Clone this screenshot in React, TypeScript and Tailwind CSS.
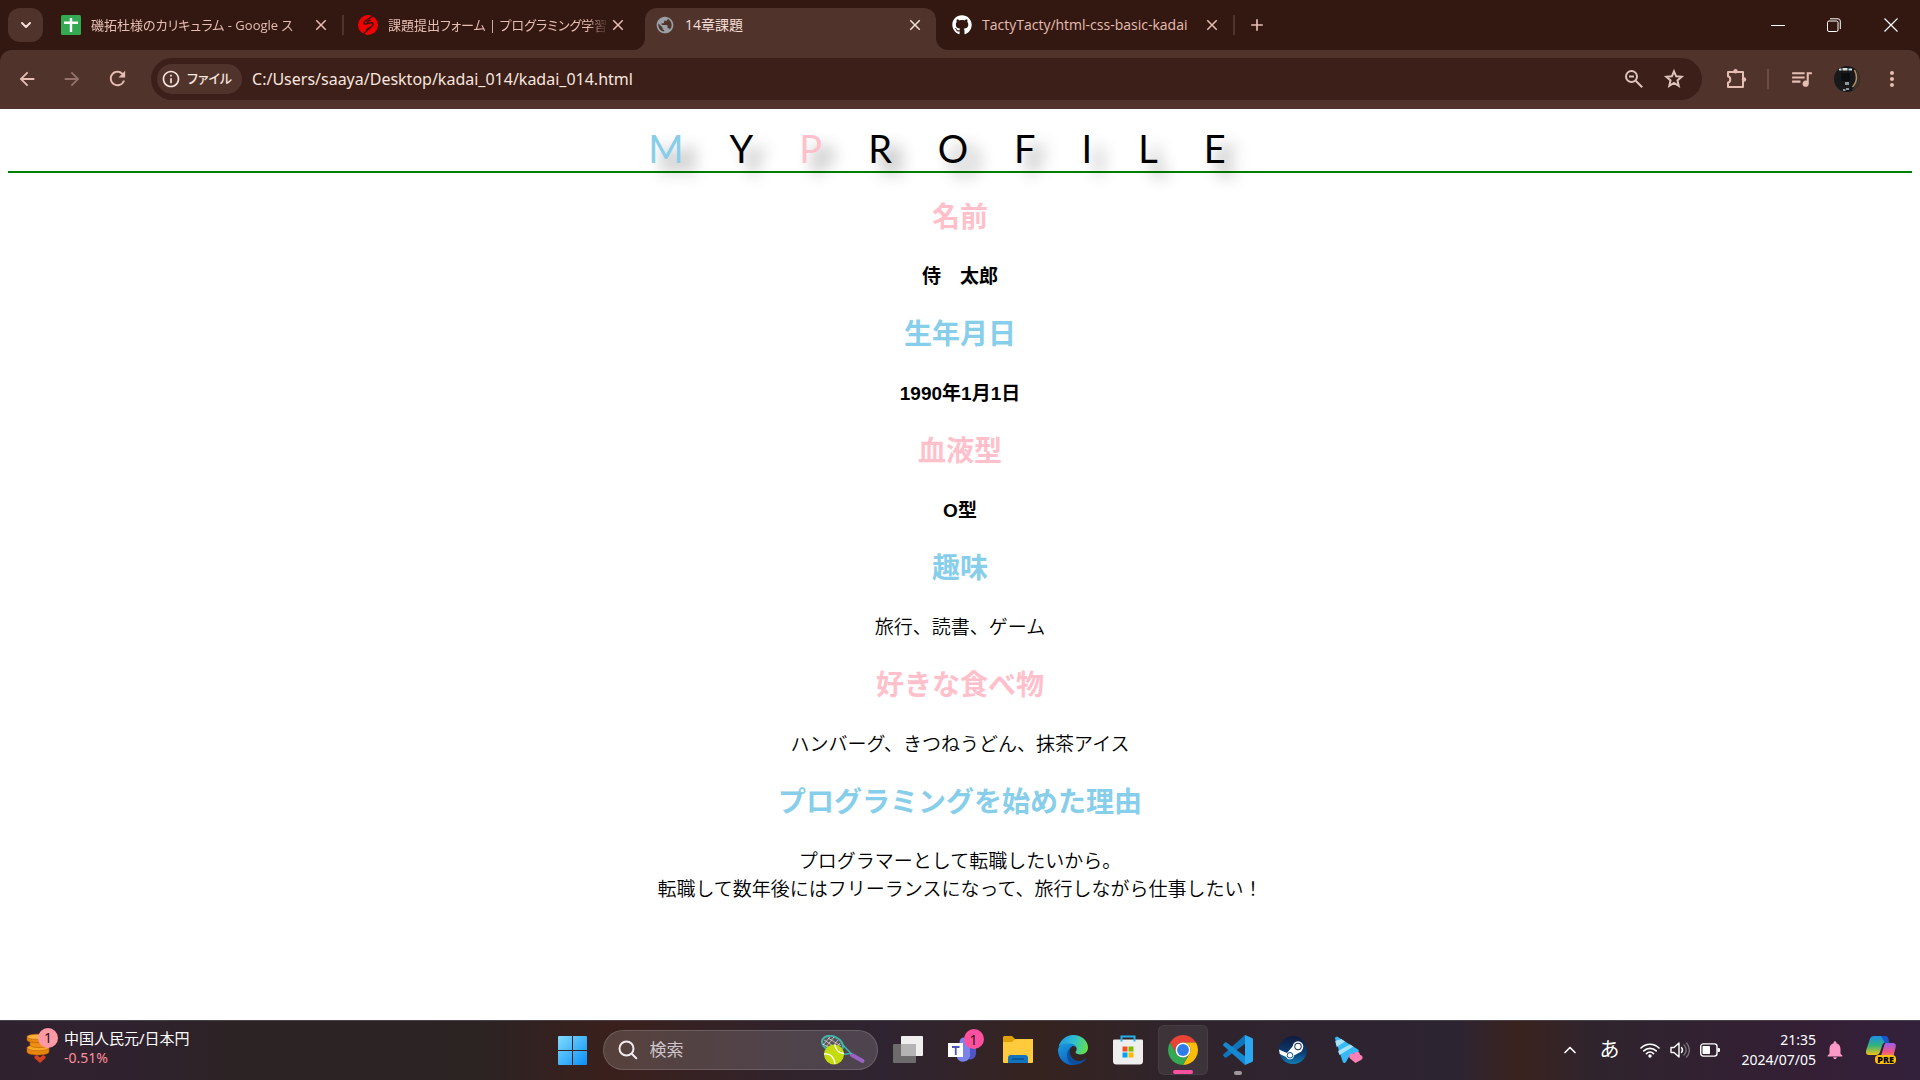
import React from "react";
import {
  MdArrowBack,
  MdArrowForward,
  MdRefresh,
  MdInfoOutline,
  MdQueueMusic,
  MdMoreVert,
  MdClose,
  MdAdd,
  MdPublic,
  MdNotifications,
} from "react-icons/md";
import { FaGithub } from "react-icons/fa";
import { ChevronDown, ChevronUp } from "lucide-react";

/* ---------- favicons ---------- */

function SheetIcon() {
  return (
    <svg viewBox="0 0 20 20" className="size-5" aria-hidden="true">
      <rect width="20" height="20" rx="1.5" fill="#34a853" />
      <path d="M10 3v14M3 7.8h14" stroke="#fff" strokeWidth="2.4" />
    </svg>
  );
}

function SamuraiIcon() {
  return (
    <svg viewBox="0 0 20 20" className="size-5" aria-hidden="true">
      <circle cx="10" cy="10" r="10" fill="#f00000" />
      <path
        d="M15 .8 7.200 6C5.200 7.600 6 9.400 8 9l4.500-1.200c2.500-.6 3.500 1.600 1.500 3.200L5 19.200M11.500 12.500l-3.500 2.800M12.300 4.800 8.500 7.400"
        fill="none"
        stroke="#331811"
        strokeWidth="1.500"
      />
    </svg>
  );
}

type TabProps = {
  title: string;
  icon: React.ReactNode;
  active?: boolean;
  divider?: boolean;
  fade?: boolean;
};

function Flare({ side }: { side: "left" | "right" }) {
  return (
    <svg
      viewBox="0 0 12 12"
      aria-hidden="true"
      className={
        side === "left"
          ? "absolute bottom-0 right-full size-3"
          : "absolute bottom-0 left-full size-3"
      }
    >
      <path
        d={side === "left" ? "M12 0A12 12 0 0 1 0 12H12Z" : "M0 0A12 12 0 0 0 12 12H0Z"}
        fill="#50342c"
      />
    </svg>
  );
}

function Tab({ title, icon, active, divider, fade }: TabProps) {
  return (
    <div className="flex h-full min-w-0 basis-[297px] items-center">
      <div
        className={
          active
            ? "relative flex h-full min-w-0 flex-1 items-center rounded-t-xl bg-[#50342c] pl-2.5 pr-3 text-[#f5dfd8]"
            : "relative flex h-full min-w-0 flex-1 items-center pl-2.5 pr-3 text-[#e6bdb2]"
        }
      >
        {active && <Flare side="left" />}
        {active && <Flare side="right" />}
        <span className="mb-2 shrink-0">{icon}</span>
        <button
          role="tab"
          aria-selected={!!active}
          className={
            fade
              ? "mb-2 ml-2.5 min-w-0 flex-1 overflow-hidden whitespace-nowrap text-left text-[13px] leading-5 [font-feature-settings:'palt'] [mask-image:linear-gradient(to_right,#000_90%,transparent)]"
              : "mb-2 ml-2.5 min-w-0 flex-1 whitespace-nowrap text-left text-[14px] leading-5"
          }
        >
          {title}
        </button>
        <button aria-label="タブを閉じる" className="mb-2 shrink-0">
          <MdClose className="size-[18px]" />
        </button>
      </div>
      <span className={divider ? "mb-2 mr-1 h-5 w-0.5 bg-[#50342c]" : "mr-1 w-0.5"} />
    </div>
  );
}

/* ---------- toolbar ---------- */

function PuzzleIcon() {
  return (
    <svg viewBox="0 0 24 24" className="size-6" fill="none" stroke="currentColor" strokeWidth="2" strokeLinejoin="round" aria-hidden="true">
      <path d="M4 5h15v15H4v-4.500c3 0 3-6 0-6Z" />
      <circle cx="11.500" cy="4.200" r="2.200" fill="currentColor" stroke="none" />
      <circle cx="20" cy="12.500" r="2.200" fill="currentColor" stroke="none" />
    </svg>
  );
}

function ZoomOutIcon() {
  return (
    <svg viewBox="0 0 20 20" className="size-5" fill="none" stroke="currentColor" strokeWidth="2" aria-hidden="true">
      <circle cx="7.500" cy="7.500" r="5.500" />
      <path d="M5 7.500h5M11.700 11.700l6.500 6.500" />
    </svg>
  );
}

function StarIcon() {
  return (
    <svg viewBox="0 0 24 24" className="size-6" fill="none" stroke="currentColor" strokeWidth="2" aria-hidden="true">
      <path d="m12 4.300 2.150 5.070 5.500.480-4.170 3.620 1.250 5.380L12 16l-4.730 2.850 1.250-5.380L4.350 9.850l5.500-.480Z" />
    </svg>
  );
}

function Avatar() {
  return (
    <svg viewBox="0 0 26 26" className="size-[26px] rounded-full" aria-hidden="true">
      <rect width="26" height="26" fill="#17191a" />
      <path d="M5 2.500h2.500v2H5zM8.500 2h5v2.500h-5zM14.500 2.500H18v2h-3.500z" fill="#d5dde0" />
      <path d="M19 3c5 6 5 14-1 21l3 1 5-6V6z" fill="#3b332c" />
      <path d="M20.500 4c3 6 2.500 12-2 17" stroke="#b58c66" strokeWidth="1.500" fill="none" />
      <path d="M11 16h4v3h-4zM9 23h2.500v2H9zM12 22h3v2h-3z" fill="#8e989b" />
      <path d="M7 7h9v8H7z" fill="#0b0d0e" />
    </svg>
  );
}

function BrowserChrome() {
  return (
    <header className="bg-[#331811] font-['Open_Sans','Noto_Sans_CJK_JP',sans-serif]">
      <div className="flex h-[50px] pt-2">
        <button
          aria-label="タブを検索"
          className="ml-2 mr-2 flex h-[34px] w-[35px] shrink-0 items-center justify-center rounded-xl bg-[#50342c] text-[#f5dfd8]"
        >
          <ChevronDown className="size-4" strokeWidth={3} />
        </button>
        <div role="tablist" className="flex h-full min-w-0 flex-1">
          <Tab title="磯拓杜様のカリキュラム - Google ス" icon={<SheetIcon />} divider fade />
          <Tab title="課題提出フォーム | プログラミング学習" icon={<SamuraiIcon />} fade />
          <Tab title="14章課題" icon={<MdPublic className="size-5 text-[#9aa0a6]" />} active />
          <Tab title="TactyTacty/html-css-basic-kadai" icon={<FaGithub className="size-5 text-white" />} divider />
          <button aria-label="新しいタブ" className="mb-2 ml-2 text-[#e6bdb2]">
            <MdAdd className="size-5" />
          </button>
        </div>
        <div className="mb-2 flex shrink-0 items-center text-white">
          <button aria-label="最小化" className="flex w-14 justify-center">
            <svg viewBox="0 0 14 14" className="size-3.5"><path d="M0 7.500h14" stroke="currentColor" /></svg>
          </button>
          <button aria-label="元に戻す" className="flex w-14 justify-center">
            <svg viewBox="0 0 14 14" className="size-3.5" fill="none" stroke="currentColor">
              <rect x=".5" y="3" width="10.500" height="10.500" rx="1.500" />
              <path d="M3 .8h8a2.300 2.300 0 0 1 2.300 2.300v8" />
            </svg>
          </button>
          <button aria-label="閉じる" className="flex w-[58px] justify-center">
            <svg viewBox="0 0 14 14" className="size-3.5"><path d="M.5.5l13 13m0-13-13 13" stroke="currentColor" strokeWidth="1.200" /></svg>
          </button>
        </div>
      </div>

      <div className="flex h-[59px] items-center rounded-t-xl bg-[#50342c] px-4 pb-0.5 text-[#e6bdb2]">
        <button aria-label="戻る"><MdArrowBack className="size-[22px]" /></button>
        <button aria-label="進む" className="ml-[23px] text-[#94716a]"><MdArrowForward className="size-[22px]" /></button>
        <button aria-label="再読み込み" className="ml-[23px]"><MdRefresh className="size-[23px]" /></button>
        <div className="ml-[22px] flex h-[42px] min-w-0 flex-1 items-center rounded-full bg-[#3b1f18] pl-1.5 pr-4">
          <button className="flex h-[30px] items-center gap-1.5 rounded-full bg-[#50342c] pl-1 pr-2.5 text-[13px] font-medium text-[#f8e5df]">
            <MdInfoOutline className="size-5" />
            <span className="[font-feature-settings:'palt']">ファイル</span>
          </button>
          <input
            aria-label="アドレスバー"
            defaultValue="C:/Users/saaya/Desktop/kadai_014/kadai_014.html"
            className="ml-2.5 min-w-0 flex-1 bg-transparent font-['Noto_Sans',sans-serif] text-[16px] leading-6 text-[#f8e5df] outline-none"
          />
          <button aria-label="ズーム" className="text-[#dcc3bc]"><ZoomOutIcon /></button>
          <button aria-label="ブックマーク" className="ml-[18px] text-[#dcc3bc]"><StarIcon /></button>
        </div>
        <button aria-label="拡張機能" className="ml-[22px]"><PuzzleIcon /></button>
        <span className="ml-[19px] h-5 w-0.5 bg-[#6f4b42]" />
        <button aria-label="メディア" className="ml-5"><MdQueueMusic className="size-[25px]" /></button>
        <button aria-label="プロフィール" className="ml-5"><Avatar /></button>
        <button aria-label="メニュー" className="ml-5"><MdMoreVert className="size-6" /></button>
      </div>
    </header>
  );
}

/* ---------- page ---------- */

type Section = { heading: string; lines: string[]; bold?: boolean };

const sections: Section[] = [
  { heading: "名前", lines: ["侍　太郎"], bold: true },
  { heading: "生年月日", lines: ["1990年1月1日"], bold: true },
  { heading: "血液型", lines: ["O型"], bold: true },
  { heading: "趣味", lines: ["旅行、読書、ゲーム"] },
  { heading: "好きな食べ物", lines: ["ハンバーグ、きつねうどん、抹茶アイス"] },
  {
    heading: "プログラミングを始めた理由",
    lines: ["プログラマーとして転職したいから。", "転職して数年後にはフリーランスになって、旅行しながら仕事したい！"],
  },
];

function Profile() {
  return (
    <main className="flex-1 bg-white px-2 pt-4 text-center font-['Liberation_Sans','Noto_Sans_CJK_JP',sans-serif] text-black">
      <h1 className="mb-px border-b-2 border-[#008000] font-['Lato',sans-serif] text-[38px] leading-[46px] tracking-[46px] [text-shadow:12px_12px_16px_rgb(0_0_0/0.45)]">
        <span className="text-[#87ceeb]">M</span>Y<span className="text-[#ffc0cb]">P</span>ROFILE
      </h1>
      {sections.map((s, i) => (
        <section key={s.heading} className="pt-[23px]">
          <h2
            className={
              i % 2 === 0
                ? "text-[28px] font-bold leading-[42px] text-[#ffc0cb]"
                : "text-[28px] font-bold leading-[42px] text-[#87ceeb]"
            }
          >
            {s.heading}
          </h2>
          <div className={s.bold ? "mt-6 text-[19px] font-bold leading-7" : "mt-6 text-[19px] font-[350] leading-7"}>
            {s.lines.map((l) => (
              <p key={l}>{l}</p>
            ))}
          </div>
        </section>
      ))}
    </main>
  );
}

/* ---------- taskbar ---------- */

function WindowsLogo() {
  return (
    <svg viewBox="0 0 29 29" className="size-[29px]" aria-hidden="true">
      <defs>
        <linearGradient id="win" x1="0" y1="0" x2="1" y2="1">
          <stop offset="0" stopColor="#7fdcff" />
          <stop offset="1" stopColor="#0a8ff5" />
        </linearGradient>
      </defs>
      <path d="M1 0h13v14H0V1a1 1 0 0 1 1-1ZM15 0h13a1 1 0 0 1 1 1v13H15ZM0 15h14v14H1a1 1 0 0 1-1-1ZM15 15h14v13a1 1 0 0 1-1 1H15Z" fill="url(#win)" />
    </svg>
  );
}

function CoinIcon() {
  return (
    <svg viewBox="0 0 26 30" className="h-[30px] w-[26px]" aria-hidden="true">
      <g stroke="#b45f06" strokeWidth=".6">
        <path d="M1 15c0-3 22-3 22 0v4c0 4-22 4-22 0Z" fill="#e8860c" />
        <ellipse cx="12" cy="14.800" rx="11" ry="3" fill="#f8a62a" />
        <path d="M4 9c0-2.500 18-2.500 18 0v3c0 3.500-18 3.500-18 0Z" fill="#ee8f12" />
        <path d="M1 4c0-3 20-3 20 0v3c0 3.500-20 3.500-20 0Z" fill="#e8860c" />
        <ellipse cx="11" cy="3.800" rx="10" ry="2.600" fill="#fbb03b" />
      </g>
      <path d="M8.500 23.500 11 22l3 2.500 3-2.500 2.500 1.500v1.500L14 30l-5.500-5Z" fill="#d8431f" />
    </svg>
  );
}

function RacketIcon() {
  return (
    <svg viewBox="0 0 44 30" className="h-[30px] w-11" aria-hidden="true">
      <path d="M31 20 41.500 26" stroke="#9b62c4" strokeWidth="4" strokeLinecap="round" />
      <ellipse cx="11.500" cy="9" rx="11" ry="7.500" transform="rotate(25 11.500 9)" fill="#5c5458" stroke="#3fb5ad" strokeWidth="2" />
      <path d="M3 5l14 9M7 3l13 8M2 9l10 6M5 12l8-10M9 15l8-10M2 10l7-8M14 15l5-7" stroke="#e4e4e4" strokeWidth=".7" />
      <path d="m21 9 9 9.500-9 1" fill="none" stroke="#3fb5ad" strokeWidth="1.600" />
      <circle cx="13" cy="19.500" r="10" fill="#c3dc0a" />
      <path d="M3 19c6-1 10 3 11 10M14 9.500c0 5 4 9 9 9" fill="none" stroke="#fff" strokeWidth="1.400" />
    </svg>
  );
}

function TaskViewIcon() {
  return (
    <svg viewBox="0 0 30 30" className="size-[30px]" aria-hidden="true">
      <rect x="8" y="1" width="22" height="20" rx="1" fill="#efefef" />
      <rect x="0" y="9" width="23" height="19" rx="1" fill="#6d6b6c" />
      <rect x="8" y="9" width="15" height="12" fill="#b4b4b4" />
    </svg>
  );
}

function TeamsIcon() {
  return (
    <svg viewBox="0 0 30 26" className="h-[26px] w-[30px]" aria-hidden="true">
      <path d="M18 8h10v9a6 6 0 0 1-8 5Z" fill="#4f55c4" />
      <circle cx="16" cy="5" r="4.500" fill="#7b83eb" />
      <path d="M9 9h13v10a7 7 0 0 1-13 2Z" fill="#7b83eb" />
      <rect y="6" width="15" height="14" fill="#fff" />
      <path d="M4 10h7.500M7.750 10v8" stroke="#4b53bc" strokeWidth="1.800" />
    </svg>
  );
}

function FolderIcon() {
  return (
    <svg viewBox="0 0 30 28" className="h-7 w-[30px]" aria-hidden="true">
      <path d="M0 1.500C0 .7.700 0 1.500 0H9l3 3h17a1 1 0 0 1 1 1v8H0Z" fill="#e0a008" />
      <path d="M0 6h9l3-3h18v23a1 1 0 0 1-1 1H1a1 1 0 0 1-1-1Z" fill="#ffcb3d" />
      <path d="M5 27v-5a3 3 0 0 1 3-3h14a3 3 0 0 1 3 3v5Z" fill="#1273bf" />
      <path d="M9 23h12" stroke="#0a4b87" strokeWidth="1.300" />
    </svg>
  );
}

function EdgeIcon() {
  return (
    <svg viewBox="0 0 30 30" className="size-[30px]" aria-hidden="true">
      <defs>
        <linearGradient id="edgeA" x1="0" y1=".3" x2="1" y2=".5">
          <stop offset="0" stopColor="#2196dc" />
          <stop offset=".5" stopColor="#2ebfd3" />
          <stop offset="1" stopColor="#63e04b" />
        </linearGradient>
        <linearGradient id="edgeB" x1="0" y1="0" x2=".6" y2="1">
          <stop offset="0" stopColor="#1b9de2" />
          <stop offset="1" stopColor="#0b62bd" />
        </linearGradient>
      </defs>
      <path d="M.5 12C2 5 8 0 15 0c9 0 15 6 15 12.500 0 4-3 7-7.500 7-3 0-5-1-5-2.200 0-.8 1.200-1.300 1.200-3.300C18.700 11 15 9 11 9 6 9 2 10.500.5 12Z" fill="url(#edgeA)" />
      <path d="M0 15C0 11 5 8.500 10.500 8.500c5 0 8.200 2.700 8.200 5.500 0-1.500-1.700-3-4.200-3C9 14 10 24 20 27c-2 2-4 3-6 3C6 30 0 23 0 15Z" fill="url(#edgeB)" />
      <path d="M12.500 13C10 20 15 26 21 26c3 0 5-1.500 6.500-2.500.4-.3.800.1.500.6C25.500 28 20.500 30 16 30c-8-2-9-14-3.500-17Z" fill="#0d4f9e" />
    </svg>
  );
}

function StoreIcon() {
  return (
    <svg viewBox="0 0 30 30" className="size-[30px]" aria-hidden="true">
      <path d="M0 6c0-1 .5-1.500 1.500-1.500h27c1 0 1.500.5 1.500 1.500v20a3.500 3.500 0 0 1-3.500 3.500h-23A3.500 3.500 0 0 1 0 26Z" fill="#eeeeee" />
      <path d="M8.500 6.500v-5h13v5" fill="none" stroke="#22b2ea" strokeWidth="2" />
      <path d="M9.500 11.500h5v5h-5z" fill="#f25022" />
      <path d="M15.500 11.500h5v5h-5z" fill="#7fba00" />
      <path d="M9.500 17.500h5v5h-5z" fill="#00a4ef" />
      <path d="M15.500 17.500h5v5h-5z" fill="#ffb900" />
    </svg>
  );
}

function ChromeIcon() {
  return (
    <svg viewBox="0 0 48 48" className="size-[30px]" aria-hidden="true">
      <path d="M24 12h20.780A24 24 0 0 0 3.220 12l10.390 18A12 12 0 0 1 24 12Z" fill="#ea4335" />
      <path d="M34.390 30 24 48A24 24 0 0 0 44.780 12H24a12 12 0 0 1 10.390 18Z" fill="#fbbc04" />
      <path d="M13.610 30 3.220 12A24 24 0 0 0 24 48l10.390-18a12 12 0 0 1-20.780 0Z" fill="#34a853" />
      <circle cx="24" cy="24" r="12" fill="#fff" />
      <circle cx="24" cy="24" r="9.500" fill="#2f7de9" />
    </svg>
  );
}

function CodeIcon() {
  return (
    <svg viewBox="0 0 30 30" className="size-[30px]" aria-hidden="true">
      <path d="M22 0 23 8 3.500 22.500c-.5.400-1 .4-1.500 0L.5 21c-.6-.5-.6-1.300 0-1.800Z" fill="#0f76bd" />
      <path d="M22 30l1-8L3.500 7.500c-.5-.4-1-.4-1.500 0L.5 9c-.6.500-.6 1.300 0 1.800Z" fill="#1688d0" />
      <path d="M22 0l7 3c.7.400 1 .9 1 1.600v20.800c0 .7-.3 1.200-1 1.600l-7 3Z" fill="#2aa9f2" />
    </svg>
  );
}

function SteamIcon() {
  return (
    <svg viewBox="0 0 28 28" className="size-7" aria-hidden="true">
      <defs>
        <linearGradient id="steam" x1="0" y1="0" x2="0" y2="1">
          <stop offset="0" stopColor="#101b3c" />
          <stop offset=".6" stopColor="#0b3d73" />
          <stop offset="1" stopColor="#0f7fb5" />
        </linearGradient>
      </defs>
      <circle cx="14" cy="14" r="14" fill="url(#steam)" />
      <path d="M0 13.500 8 17l5.500-6.500 5-4.500 5 5-1 4.500-7.500 4a4.200 4.200 0 0 1-8 1.500L.800 18Z" fill="#fff" />
      <circle cx="19" cy="10.500" r="5.300" fill="#fff" />
      <circle cx="19" cy="10.500" r="3.700" fill="#16305c" />
      <circle cx="19" cy="10.500" r="2.700" fill="#fff" />
      <circle cx="11" cy="19.300" r="2.800" fill="none" stroke="#14508a" strokeWidth="1" />
    </svg>
  );
}

function PointerIcon() {
  return (
    <svg viewBox="0 0 30 30" className="size-[30px]" aria-hidden="true">
      <path d="M2 3.500C2 2 3.500 1.300 4.800 2L25 14.500c1.400.8 1 2.700-.5 3L17 20l-4 7c-.8 1.300-2.500 1.300-3.200 0Z" fill="#37b9f5" />
      <path d="m2.200 6 6-2L12 6.500 3.700 12ZM5 16l12-6.500 3.500 2L6.500 20Z" fill="#a6e3fc" />
      <path d="M22.500 28 17 23.500c-2.500-3 .8-6.500 4-4.500 1.500-3.500 6-2.500 6 1 3.500.3 3.300 4.500 0 5.500Z" fill="#ff7fb4" />
    </svg>
  );
}

function TaskButton({
  label,
  active,
  running,
  badge,
  children,
}: {
  label: string;
  active?: boolean;
  running?: boolean;
  badge?: string;
  children: React.ReactNode;
}) {
  return (
    <button
      aria-label={label}
      className={
        active
          ? "relative flex size-[50px] items-center justify-center rounded-md border border-white/5 bg-white/[0.07]"
          : "relative flex size-[50px] items-center justify-center"
      }
    >
      {children}
      {badge && (
        <span className="absolute right-1 top-1 flex size-5 items-center justify-center rounded-full bg-[#ff4f9f] text-[14px] text-[#2b1520]">
          {badge}
        </span>
      )}
      {active && <span className="absolute bottom-0 h-1 w-5 rounded-full bg-[#ff4f9f]" />}
      {running && <span className="absolute bottom-0 h-1 w-2 rounded-full bg-[#9d979c]" />}
    </button>
  );
}

function WifiIcon() {
  return (
    <svg viewBox="0 0 20 16" className="h-4 w-5" fill="none" stroke="currentColor" strokeWidth="1.600" strokeLinecap="round" aria-hidden="true">
      <path d="M1 6a12.700 12.700 0 0 1 18 0M3.800 8.900a8.800 8.800 0 0 1 12.400 0M6.500 11.600a5 5 0 0 1 7 0" />
      <circle cx="10" cy="14" r="1.700" fill="currentColor" stroke="none" />
    </svg>
  );
}

function SpeakerIcon() {
  return (
    <svg viewBox="0 0 20 18" className="h-[18px] w-5" fill="none" stroke="currentColor" strokeWidth="1.400" strokeLinejoin="round" strokeLinecap="round" aria-hidden="true">
      <path d="M1 6.500h3l5-4.500v14l-5-4.500H1ZM11.500 6.500a4 4 0 0 1 0 5" />
      <path d="M14 4a7 7 0 0 1 0 10M16.500 2a10 10 0 0 1 0 14" opacity=".35" />
    </svg>
  );
}

function BatteryIcon() {
  return (
    <svg viewBox="0 0 20 14" className="h-3.5 w-5" aria-hidden="true">
      <rect x=".7" y=".9" width="16.300" height="12.200" rx="2.500" fill="none" stroke="currentColor" strokeWidth="1.400" />
      <rect x="2.500" y="3" width="7.500" height="8" rx=".8" fill="currentColor" />
      <path d="M17.500 5h1.500a1 1 0 0 1 1 1v2a1 1 0 0 1-1 1h-1.500Z" fill="currentColor" />
    </svg>
  );
}

function CopilotIcon() {
  return (
    <svg viewBox="0 0 30 28" className="h-7 w-[30px]" aria-hidden="true">
      <defs>
        <linearGradient id="copA" x1="0" y1="0" x2="0" y2="1">
          <stop offset="0" stopColor="#1a8fe8" />
          <stop offset=".5" stopColor="#32b37a" />
          <stop offset="1" stopColor="#f0c419" />
        </linearGradient>
        <linearGradient id="copB" x1="0" y1="0" x2="0" y2="1">
          <stop offset="0" stopColor="#9b5cf0" />
          <stop offset=".6" stopColor="#f0567e" />
          <stop offset="1" stopColor="#f79a4b" />
        </linearGradient>
      </defs>
      <path d="M8 0h10c2 0 3 1 3.500 3L22 6c-4 0-5 1-6 4l-2 6c-.8 2-2 3-4 3H3c-3 0-3.500-2-2.700-5L3.500 4C4.300 1.500 5.500 0 8 0Z" fill="url(#copA)" />
      <path d="M15 0h4c2 0 3 1 3.500 3l.8 4H19Z" fill="#1658c9" />
      <path d="M20 7h7c2.500 0 3.300 2 2.600 4.500L27 22H13.500c1-.8 1.300-1.600 1.900-3.200L18 10c.5-2 1-3 2-3Z" fill="url(#copB)" />
    </svg>
  );
}

function Taskbar() {
  return (
    <footer className="grid h-[60px] grid-cols-[1fr_auto_1fr] items-center bg-[linear-gradient(to_right,#30212f_0%,#2f222e_7%,#2c2325_12%,#2c2323_25%,#3a201c_32%,#32232a_40%,#2f2431_46%,#35231f_54%,#2f242d_62%,#2d2432_76%,#3a231e_79%,#2f242d_83%,#341f35_94%,#33203a_100%)] font-['Noto_Sans','Noto_Sans_CJK_JP',sans-serif] text-white shadow-[inset_0_1px_0_#48434a]">
      <button className="relative ml-[26px] flex items-center justify-self-start pb-1 text-left text-[15px] leading-5">
        <CoinIcon />
        <span className="absolute left-3 top-0 flex size-5 items-center justify-center rounded-full bg-[#ff99a4] text-[14px] text-[#2b1520]">
          1
        </span>
        <span className="ml-3 flex flex-col">
          <span>中国人民元/日本円</span>
          <span className="text-[14px] text-[#ff8f9b]">-0.51%</span>
        </span>
      </button>

      <div className="flex items-center gap-[5px]">
        <TaskButton label="スタート"><WindowsLogo /></TaskButton>
        <div className="flex h-10 w-[275px] items-center rounded-full border border-white/15 bg-white/15 pl-3.5 pr-3">
          <svg viewBox="0 0 20 20" className="size-5 shrink-0" fill="none" stroke="#f0eaec" strokeWidth="2" strokeLinecap="round" aria-hidden="true">
            <circle cx="8.500" cy="8.500" r="7" />
            <path d="m13.700 13.700 4.600 4.600" />
          </svg>
          <input
            aria-label="検索"
            placeholder="検索"
            className="ml-3 min-w-0 flex-1 bg-transparent text-[17px] outline-none placeholder:text-[#cdc5ca]"
          />
          <RacketIcon />
        </div>
        <TaskButton label="タスクビュー"><TaskViewIcon /></TaskButton>
        <TaskButton label="Teams" badge="1"><TeamsIcon /></TaskButton>
        <TaskButton label="エクスプローラー"><FolderIcon /></TaskButton>
        <TaskButton label="Edge"><EdgeIcon /></TaskButton>
        <TaskButton label="Store"><StoreIcon /></TaskButton>
        <TaskButton label="Chrome" active><ChromeIcon /></TaskButton>
        <TaskButton label="Visual Studio Code" running><CodeIcon /></TaskButton>
        <TaskButton label="Steam"><SteamIcon /></TaskButton>
        <TaskButton label="カーソル"><PointerIcon /></TaskButton>
      </div>

      <div className="flex items-center justify-self-end pr-6">
        <button aria-label="隠れているインジケーター"><ChevronUp className="size-5" /></button>
        <button className="ml-5 text-[20px] leading-6">あ</button>
        <button aria-label="クイック設定" className="ml-5 flex items-center gap-2.5">
          <WifiIcon />
          <SpeakerIcon />
          <BatteryIcon />
        </button>
        <button className="ml-[22px] text-right text-[14px] leading-5">
          <span className="block">21:35</span>
          <span className="block">2024/07/05</span>
        </button>
        <button aria-label="通知" className="ml-2 text-[#ff9ac8]"><MdNotifications className="size-[22px]" /></button>
        <button aria-label="Copilot" className="relative ml-5">
          <CopilotIcon />
          <span className="absolute bottom-0 right-0 rounded-sm bg-[#ffc20e] px-0.5 text-[9px] font-black leading-[9px] text-black">PRE</span>
        </button>
      </div>
    </footer>
  );
}

export default function App() {
  return (
    <div className="flex min-h-screen flex-col">
      <BrowserChrome />
      <Profile />
      <Taskbar />
    </div>
  );
}
